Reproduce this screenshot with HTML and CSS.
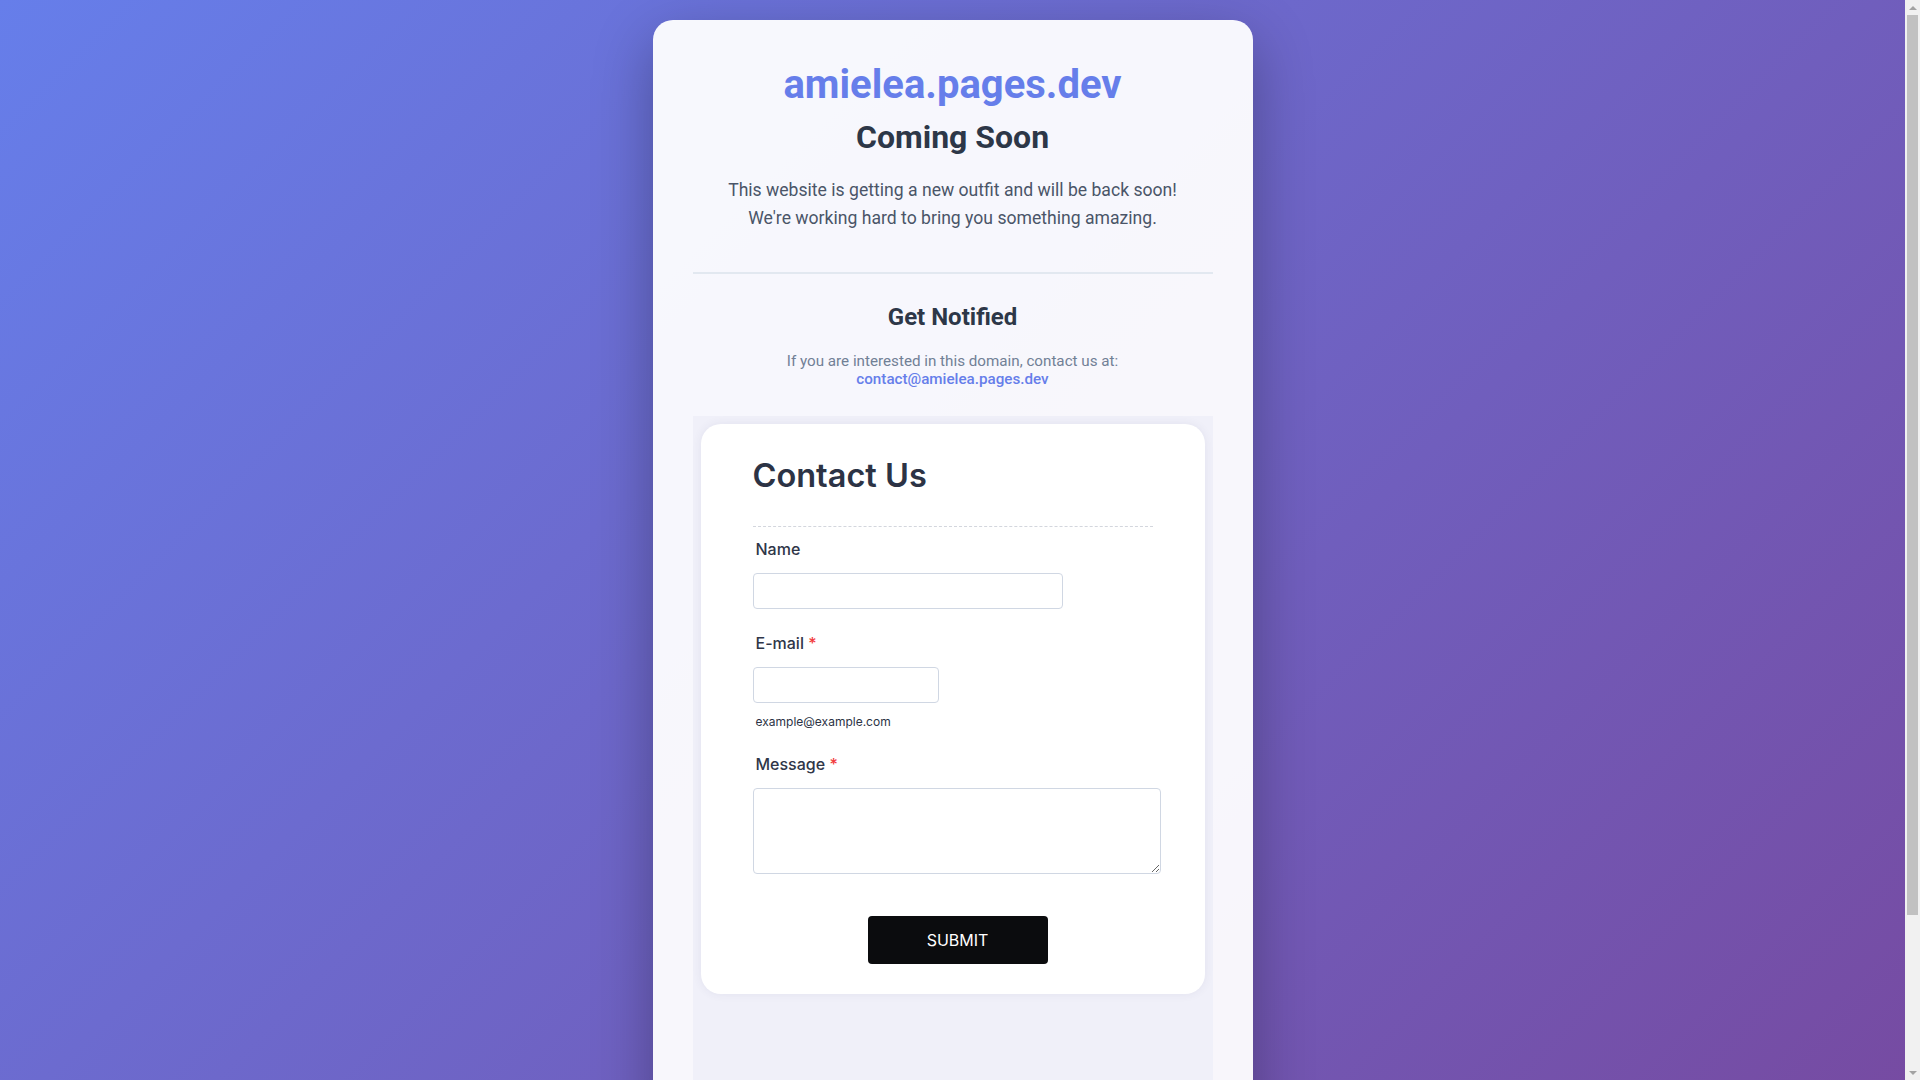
FILE: index.html
```html
<!DOCTYPE html>
<html lang="en">
<head>
<meta charset="utf-8">
<title>amielea.pages.dev - Coming Soon</title>
<link rel="stylesheet" href="styles.css">
</head>
<body>
<main class="page">
  <section class="card">
    <h1 class="domain">amielea.pages.dev</h1>
    <h2 class="status">Coming Soon</h2>
    <p class="intro">This website is getting a new outfit and will be back soon!<br>We're working hard to bring you something amazing.</p>
    <hr class="divider">
    <h3 class="notify-title">Get Notified</h3>
    <p class="notify-text">If you are interested in this domain, contact us at:<br><a class="notify-link" href="#">contact@amielea.pages.dev</a></p>
    <div class="frame">
      <form class="form-card">
        <div class="form-header">Contact Us</div>
        <div class="field">
          <label class="field-label">Name</label>
          <input class="input input-name" type="text">
        </div>
        <div class="field">
          <label class="field-label">E-mail <span class="req">*</span></label>
          <input class="input input-email" type="email">
          <span class="hint">example@example.com</span>
        </div>
        <div class="field">
          <label class="field-label">Message <span class="req">*</span></label>
          <textarea class="input input-message"></textarea>
        </div>
        <div class="actions">
          <button class="submit" type="button">SUBMIT</button>
        </div>
      </form>
    </div>
  </section>
</main>
<div class="scrollbar" aria-hidden="true">
  <span class="sb-arrow sb-up"></span>
  <span class="sb-track"><span class="sb-thumb"></span></span>
  <span class="sb-arrow sb-down"></span>
</div>
</body>
</html>
```
FILE: styles.css
```css
html, body {
  margin: 0;
  padding: 0;
}

body {
  min-height: 100vh;
  background: linear-gradient(135deg, #667eea 0%, #764ba2 100%);
  background-attachment: fixed;
  font-family: Roboto, "Liberation Sans", sans-serif;
}

.page {
  display: flex;
  justify-content: center;
  padding: 20px 15px 20px 0;
}

/* imitation of the browser's vertical scrollbar */
.scrollbar {
  position: fixed;
  top: 0;
  right: 0;
  width: 15px;
  height: 100vh;
  display: flex;
  flex-direction: column;
  background: #f1f1f1;
}

.sb-arrow {
  flex: 0 0 15px;
  display: flex;
  align-items: center;
  justify-content: center;
}

.sb-arrow::before {
  content: "";
  width: 0;
  height: 0;
  border-left: 4px solid transparent;
  border-right: 4px solid transparent;
}

.sb-up::before {
  border-bottom: 4px solid #a3a3a3;
}

.sb-down::before {
  border-top: 4px solid #a3a3a3;
}

.sb-track {
  flex: 1;
  display: flex;
  flex-direction: column;
  padding: 0 2px;
}

.sb-thumb {
  height: 900px;
  background: #c1c1c1;
}

.card {
  box-sizing: border-box;
  width: 600px;
  padding: 41px 40px 40px;
  background: rgba(255, 255, 255, 0.95);
  border-radius: 20px;
  box-shadow: 0 20px 60px rgba(0, 0, 0, 0.3);
  text-align: center;
}

.domain {
  margin: 0 0 8.5px;
  font-size: 40px;
  line-height: 48px;
  font-weight: 700;
  color: #667eea;
}

.status {
  margin: 0;
  font-size: 32px;
  line-height: 38px;
  font-weight: 700;
  color: #2d3748;
}

.intro {
  margin: 20px 0 0;
  font-size: 17.6px;
  line-height: 28.2px;
  color: #4a5568;
}

.divider {
  margin: 40.5px 0 0;
  border: 0;
  height: 2px;
  background: #e2e8f0;
}

.notify-title {
  margin: 29px 0 0;
  font-size: 24px;
  line-height: 29px;
  font-weight: 700;
  color: #2d3748;
}

.notify-text {
  margin: 20px 0 0;
  font-size: 15.2px;
  line-height: 18px;
  color: #718096;
}

.notify-link {
  color: #667eea;
  font-weight: 500;
  text-decoration: none;
}

.frame {
  margin-top: 28px;
  height: 720px;
  padding: 8px;
  background: #f0f0f9;
  text-align: left;
}

.form-card {
  display: flex;
  flex-direction: column;
  padding: 32px 44px 30px 52px;
  background: #ffffff;
  border-radius: 20px;
  box-shadow: 0 0 10px rgba(60, 60, 120, 0.08);
  font-family: Inter, "Liberation Sans", sans-serif;
}

.form-header {
  width: 400px;
  padding-bottom: 31px;
  border-bottom: 1px dashed #d3d6dd;
  font-size: 32.5px;
  line-height: 39px;
  font-weight: 600;
  color: #2c3345;
}

.field {
  display: flex;
  flex-direction: column;
  align-items: flex-start;
  margin-top: 12px;
}

.field + .field {
  margin-top: 24px;
}

.field-label {
  padding-left: 3px;
  font-size: 16px;
  line-height: 20px;
  font-weight: 500;
  color: #2f3648;
}

.req {
  color: #f23a3c;
}

.input {
  box-sizing: border-box;
  margin-top: 14px;
  height: 36px;
  border: 1px solid #d0d7e3;
  border-radius: 4px;
  background: #ffffff;
  font-family: Inter, "Liberation Sans", sans-serif;
  font-size: 14px;
}

.input-name {
  width: 310px;
}

.input-email {
  width: 186px;
}

.input-message {
  width: 408px;
  height: 86px;
  resize: both;
}

.hint {
  margin-top: 11px;
  padding-left: 3px;
  font-size: 12px;
  line-height: 16px;
  color: #2c3345;
}

.actions {
  display: flex;
  justify-content: center;
  width: 410px;
  margin-top: 42px;
}

.submit {
  width: 180px;
  height: 48px;
  border: 0;
  border-radius: 4px;
  background: #0b0c0e;
  color: #ffffff;
  font-family: Inter, "Liberation Sans", sans-serif;
  font-size: 16px;
  font-weight: 400;
  letter-spacing: 0;
}
```
